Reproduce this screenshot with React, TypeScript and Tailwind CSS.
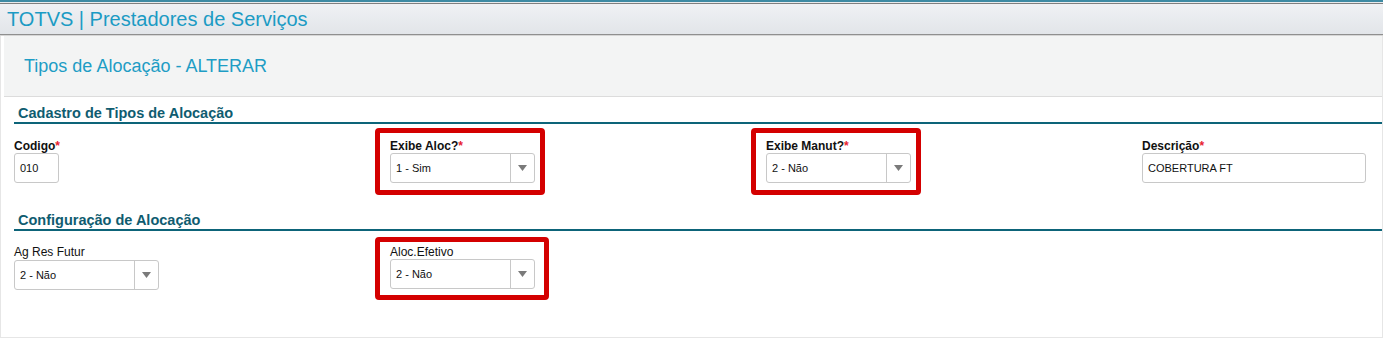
import React from "react";

const font = "font-['Liberation_Sans',Arial,sans-serif]";

function Label({ text, required, bold = true }: { text: string; required?: boolean; bold?: boolean }) {
  return (
    <div className={`h-[13px] text-[12px] leading-[13px] text-[#111] ${bold ? "font-bold" : ""}`}>
      {text}
      {required ? <span className="text-[#e8212f]">*</span> : null}
    </div>
  );
}

function TextBox({ value, width }: { value: string; width: string }) {
  return (
    <div
      className={`flex h-[30px] items-center rounded-[3px] border border-[#c8c8c8] bg-white px-[5px] text-[11px] text-[#111] ${width}`}
    >
      {value}
    </div>
  );
}

function Select({ value, className = "" }: { value: string; className?: string }) {
  return (
    <div
      className={`flex h-[30px] w-[145px] items-center rounded-[3px] border border-[#c8c8c8] bg-white text-[11px] text-[#111] ${className}`}
    >
      <div className="flex-1 px-[5px]">{value}</div>
      <div className="flex h-full w-[24px] items-center justify-center border-l border-[#c8c8c8]">
        <svg width="9" height="6" viewBox="0 0 9 6">
          <path d="M0 0h9L4.5 6z" fill="#7a7a7a" />
        </svg>
      </div>
    </div>
  );
}

function Highlight({ children, className }: { children: React.ReactNode; className: string }) {
  return (
    <div className={`-ml-[15px] rounded-[4px] border-[5px] border-[#d40000] pl-[10px] ${className}`}>{children}</div>
  );
}

function SectionTitle({ text, className }: { text: string; className: string }) {
  return (
    <div className={`ml-[13px] border-b-2 border-[#0d6479] pl-[4px] ${className}`}>
      <span className="block text-[14.5px] font-bold leading-[17px] text-[#0f5c70]">{text}</span>
    </div>
  );
}

export default function App() {
  return (
    <div className={`h-[338px] w-[1383px] overflow-hidden bg-white ${font}`}>
      <div className="h-[2px] bg-[#3d8aa3]" />
      <div className="h-[1px] bg-[#e8eaec]" />
      <div className="h-[1px] bg-[#7f7f7f]" />
      <div className="flex h-[30px] items-center bg-gradient-to-b from-[#eff1f4] to-[#e2e5e9] pl-[7px]">
        <span className="text-[20px] leading-[22px] text-[#1b9bc4]">TOTVS | Prestadores de Serviços</span>
      </div>
      <div className="h-[1px] bg-[#8f8f8f]" />
      <div className="h-[1px] bg-[#d6d6d6]" />

      <div className="h-[302px] border-l border-r border-b border-[#e6e6e6]">
        <div className="ml-[3px] flex h-[61px] items-center border-b border-[#dcdcdc] bg-[#f3f4f4] pl-[20px]">
          <span className="text-[18px] leading-[22px] text-[#1e9dc5]">Tipos de Alocação - ALTERAR</span>
        </div>

        <SectionTitle text="Cadastro de Tipos de Alocação" className="mt-[8px]" />
        <div className="ml-[13px] mt-[4px] grid grid-cols-[376px_376px_376px_1fr]">
          <div className="pt-[12px]">
            <Label text="Codigo" required />
            <TextBox value="010" width="w-[45px]" />
          </div>
          <div>
            <Highlight className="w-[170px] pt-[7px] pb-[7px]">
              <Label text="Exibe Aloc?" required />
              <Select value="1 - Sim" />
            </Highlight>
          </div>
          <div>
            <Highlight className="w-[170px] pt-[7px] pb-[7px]">
              <Label text="Exibe Manut?" required />
              <Select value="2 - Não" />
            </Highlight>
          </div>
          <div className="pt-[12px]">
            <Label text="Descrição" required />
            <TextBox value="COBERTURA FT" width="w-[224px]" />
          </div>
        </div>

        <SectionTitle text="Configuração de Alocação" className="mt-[17px]" />
        <div className="ml-[13px] mt-[6px] grid grid-cols-[376px_376px_376px_1fr]">
          <div className="pt-[9px]">
            <Label text="Ag Res Futur" bold={false} />
            <Select value="2 - Não" className="mt-[1px]" />
          </div>
          <div>
            <Highlight className="w-[174px] pt-[4px] pb-[6px]">
              <Label text="Aloc.Efetivo" bold={false} />
              <Select value="2 - Não" />
            </Highlight>
          </div>
        </div>
      </div>
    </div>
  );
}
